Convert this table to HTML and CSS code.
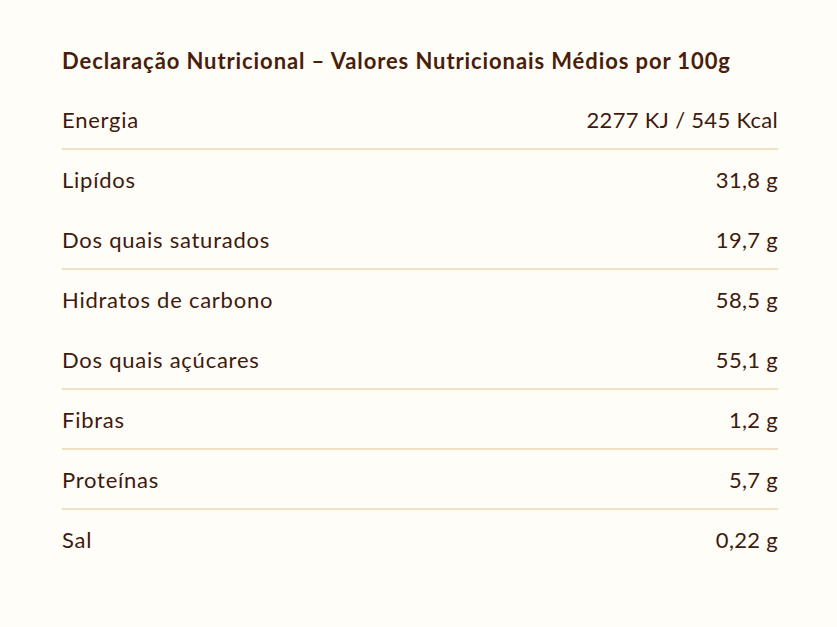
FILE: index.html
```html
<!DOCTYPE html>
<html lang="pt">
<head>
<meta charset="utf-8">
<link rel="stylesheet" href="styles.css">
</head>
<body>
<section class="nutrition">
  <h2 class="nutrition__title">Declaração Nutricional – Valores Nutricionais Médios por 100g</h2>
  <div class="nutrition__table">
    <div class="row row--sep"><span>Energia</span><span class="row__value">2277 KJ / 545 Kcal</span></div>
    <div class="row"><span>Lipídos</span><span class="row__value">31,8 g</span></div>
    <div class="row row--sep"><span>Dos quais saturados</span><span class="row__value">19,7 g</span></div>
    <div class="row"><span>Hidratos de carbono</span><span class="row__value">58,5 g</span></div>
    <div class="row row--sep"><span>Dos quais açúcares</span><span class="row__value">55,1 g</span></div>
    <div class="row row--sep"><span>Fibras</span><span class="row__value">1,2 g</span></div>
    <div class="row row--sep"><span>Proteínas</span><span class="row__value">5,7 g</span></div>
    <div class="row"><span>Sal</span><span class="row__value">0,22 g</span></div>
  </div>
</section>
</body>
</html>
```
FILE: styles.css
```css
html, body {
  margin: 0;
  padding: 0;
  background: #fffdf8;
}
body {
  font-family: "Lato", "Open Sans", sans-serif;
  color: #3f1a0c;
}
.nutrition {
  width: 716px;
  padding: 46px 0 0 62px;
}
.nutrition__title {
  margin: 0 0 14px;
  font-size: 22px;
  line-height: 30px;
  font-weight: 700;
  letter-spacing: 0.9px;
  color: #4a1e0a;
}
.nutrition__table {
  display: flex;
  flex-direction: column;
}
.row {
  display: flex;
  justify-content: space-between;
  align-items: center;
  box-sizing: border-box;
  height: 60px;
  padding-bottom: 0;
  border-bottom: 2px solid transparent;
  font-size: 22px;
  letter-spacing: 0.75px;
}
.row__value {
  letter-spacing: 0.3px;
}
.row--sep {
  border-bottom-color: #f1e1c4;
}
```
